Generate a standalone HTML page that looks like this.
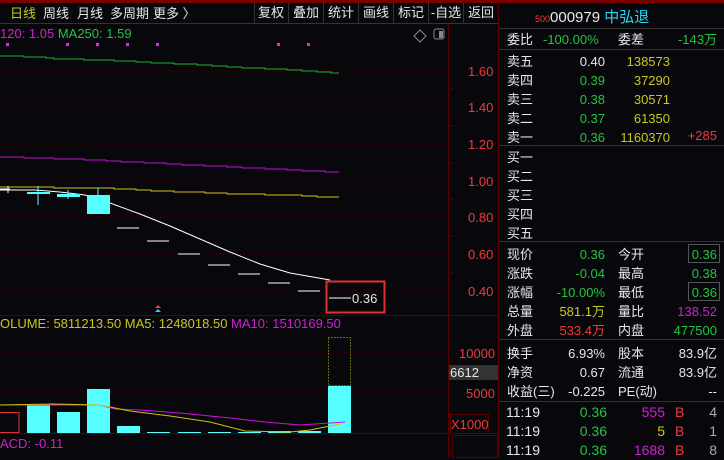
<!DOCTYPE html>
<html><head><meta charset="utf-8"><style>
body{margin:0;width:724px;height:458px;background:#08080c;overflow:hidden;font-family:"Liberation Sans","Noto Sans CJK SC",sans-serif;font-size:13px;color:#ddd;position:relative}
.a{position:absolute;white-space:nowrap;line-height:15px}
.r{text-align:right}
.w{color:#e8e8e8}.g{color:#22c440}.y{color:#c8c81e}.rd{color:#f03a3a}.m{color:#d020d0}.c{color:#20d8f0}.gr{color:#aaa}
.tb{position:absolute;top:3px;height:20px;border-right:1px solid #333;color:#e8e8e8;line-height:20px;font-size:13px;text-align:center}
</style></head><body>
<div style="position:absolute;left:0;top:0;width:724px;height:3px;background:#7a0000"></div>
<div style="position:absolute;left:0;top:23px;width:498px;height:1px;background:#333"></div>
<div class="a" style="left:10px;top:6px;color:#c8c81e">日线</div>
<div class="a w" style="left:43px;top:6px">周线</div>
<div class="a w" style="left:77px;top:6px">月线</div>
<div class="a w" style="left:110px;top:6px">多周期</div>
<div class="a w" style="left:153px;top:6px">更多 〉</div>
<div style="position:absolute;left:254px;top:3px;height:20px;width:1px;background:#333"></div>
<div class="tb" style="left:254px;width:34px">复权</div>
<div class="tb" style="left:289px;width:34px">叠加</div>
<div class="tb" style="left:324px;width:34px">统计</div>
<div class="tb" style="left:359px;width:34px">画线</div>
<div class="tb" style="left:394px;width:34px">标记</div>
<div class="tb" style="left:429px;width:34px">-自选</div>
<div class="tb" style="left:464px;width:34px">返回</div>
<div class="a m" style="left:0;top:26px">120: 1.05 <span class="g">MA250: 1.59</span></div>
<svg style="position:absolute;left:0;top:0" width="499" height="458">
<g stroke="#5a0000" stroke-dasharray="1,3">
<line x1="0" y1="71" x2="448" y2="71"/><line x1="0" y1="107" x2="448" y2="107"/><line x1="0" y1="144" x2="448" y2="144"/><line x1="0" y1="181" x2="448" y2="181"/><line x1="0" y1="217" x2="448" y2="217"/><line x1="0" y1="254" x2="448" y2="254"/><line x1="0" y1="291" x2="448" y2="291"/><line x1="0" y1="353" x2="448" y2="353"/><line x1="0" y1="393" x2="448" y2="393"/></g>
<line x1="448.5" y1="24" x2="448.5" y2="458" stroke="#5a0000"/>
<line x1="0" y1="315.5" x2="498" y2="315.5" stroke="#5a0000"/>
<line x1="0" y1="433.5" x2="498" y2="433.5" stroke="#5a0000"/>
<line x1="498.5" y1="0" x2="498.5" y2="458" stroke="#5a0000"/>
<g stroke="#5a0000"><line x1="448" y1="89" x2="453" y2="89"/><line x1="448" y1="126" x2="453" y2="126"/><line x1="448" y1="163" x2="453" y2="163"/><line x1="448" y1="199" x2="453" y2="199"/><line x1="448" y1="236" x2="453" y2="236"/><line x1="448" y1="273" x2="453" y2="273"/></g>
<g fill="#f020f0"><rect x="6" y="43" width="3" height="3"/><rect x="66" y="43" width="3" height="3"/><rect x="96" y="43" width="3" height="3"/><rect x="126" y="43" width="3" height="3"/><rect x="156" y="43" width="3" height="3"/><rect x="277" y="43" width="3" height="3"/><rect x="307" y="43" width="3" height="3"/></g>
<polyline fill="none" stroke="#20b030" stroke-width="1" points="0,56 24,56 24,57 46,57 46,58 54,58 54,59 84,59 84,60 114,60 114,61 136,61 136,62 151,62 151,63 174,63 174,64 197,64 197,65 212,65 212,66 227,66 227,67 242,67 242,68 265,68 265,69 287,69 287,70 302,70 302,71 317,71 317,72 331,72 331,73 339,73"/>
<polyline fill="none" stroke="#c010d0" stroke-width="1" points="0,157 24,157 24,158 54,158 54,159 84,159 84,160 106,160 106,161 121,161 121,162 144,162 144,163 166,163 166,164 182,164 182,165 204,165 204,166 227,166 227,167 242,167 242,168 265,168 265,169 287,169 287,170 302,170 302,171 325,171 325,172 339,172"/>
<polyline fill="none" stroke="#d0c010" stroke-width="1" points="0,187 54,187 54,188 114,188 114,189 136,189 136,190 151,190 151,191 174,191 174,192 205,192 205,193 227,193 227,194 265,194 265,195 302,195 302,196 317,196 317,197 339,197"/>
<polyline fill="none" stroke="#fff" stroke-width="1" points="0,190 35,190 60,192 85,195 110,203 140,214 170,226 200,239 230,252 260,264 290,273 330,280"/>
<g stroke="#fff"><line x1="0" y1="189" x2="10" y2="189"/><line x1="8" y1="186" x2="8" y2="193"/><line x1="117" y1="228" x2="139" y2="228"/><line x1="147" y1="241" x2="169" y2="241"/><line x1="178" y1="254" x2="200" y2="254"/><line x1="208" y1="265" x2="230" y2="265"/><line x1="238" y1="274" x2="260" y2="274"/><line x1="268" y1="283" x2="290" y2="283"/><line x1="298" y1="291" x2="320" y2="291"/><line x1="329" y1="298" x2="351" y2="298"/></g>
<g fill="#5ff"><rect x="27" y="192" width="23" height="2"/><line x1="38" y1="186" x2="38" y2="205" stroke="#5ff"/><rect x="57" y="194" width="23" height="3"/><line x1="68" y1="190" x2="68" y2="199" stroke="#5ff"/><rect x="87" y="195" width="23" height="19"/><line x1="98" y1="188" x2="98" y2="195" stroke="#5ff"/></g>
<rect x="326.5" y="281.5" width="58" height="31" fill="none" stroke="#e03030" stroke-width="2"/>
<path d="M155 308 l3 -3 l3 3z" fill="#f33"/><path d="M155 312 l3 -3 l3 3z" fill="#3cf"/>
<g fill="#5ff"><rect x="27" y="404" width="23" height="29"/><rect x="57" y="412" width="23" height="21"/><rect x="87" y="389" width="23" height="44"/><rect x="117" y="426" width="23" height="7"/><rect x="147" y="432" width="23" height="1"/><rect x="178" y="432" width="23" height="1"/><rect x="208" y="432" width="23" height="1"/><rect x="238" y="432" width="23" height="1"/><rect x="268" y="431" width="23" height="2"/><rect x="298" y="431" width="23" height="2"/><rect x="328" y="386" width="23" height="47"/></g>
<rect x="328.5" y="337.5" width="22" height="48" fill="none" stroke="#c8c81e" stroke-dasharray="1,2"/>
<rect x="-1" y="412.5" width="20" height="20" fill="none" stroke="#e03030"/>
<polyline fill="none" stroke="#d010e0" points="0,405 100,405 115,409 140,410 180,413 230,418 265,422 300,425 330,423 345,422"/>
<polyline fill="none" stroke="#d0c010" points="0,405 53,404 100,405 115,408 130,411 170,416 210,422 245,431 290,432 310,430 330,426 340,424"/>
<rect x="450.5" y="414.5" width="38" height="19" fill="none" stroke="#5a0000"/>
<rect x="449" y="365" width="49" height="15" fill="#333"/>
<rect x="452.5" y="435.5" width="45" height="22" fill="none" stroke="#5a0000"/>
<path d="M420 30 l6 6 l-6 6 l-6 -6z" fill="none" stroke="#888"/>
<rect x="434" y="29" width="10" height="10" rx="2" fill="none" stroke="#888"/><rect x="439" y="31" width="4" height="7" fill="#888"/>
</svg>
<div class="a rd" style="left:468px;top:64px">1.60</div>
<div class="a rd" style="left:468px;top:100px">1.40</div>
<div class="a rd" style="left:468px;top:137px">1.20</div>
<div class="a rd" style="left:468px;top:174px">1.00</div>
<div class="a rd" style="left:468px;top:210px">0.80</div>
<div class="a rd" style="left:468px;top:247px">0.60</div>
<div class="a rd" style="left:468px;top:284px">0.40</div>
<div class="a w" style="left:352px;top:291px">0.36</div>
<div class="a y" style="left:0;top:316px">OLUME: 5811213.50 MA5: 1248018.50 <span class="m">MA10: 1510169.50</span></div>
<div class="a rd" style="left:459px;top:346px">10000</div>
<div class="a w" style="left:450px;top:365px">6612</div>
<div class="a rd" style="left:466px;top:386px">5000</div>
<div class="a rd" style="left:451px;top:417px">X1000</div>
<div class="a m" style="left:0;top:436px">ACD: -0.11</div>
<div style="position:absolute;left:499px;top:28px;width:225px;height:1px;background:#333"></div>
<div style="position:absolute;left:499px;top:49px;width:225px;height:1px;background:#333"></div>
<div style="position:absolute;left:499px;top:145px;width:225px;height:1px;background:#333"></div>
<div style="position:absolute;left:499px;top:241px;width:225px;height:1px;background:#333"></div>
<div style="position:absolute;left:499px;top:339px;width:225px;height:1px;background:#333"></div>
<div style="position:absolute;left:499px;top:401px;width:225px;height:1px;background:#333"></div>
<div class="a" style="left:535px;top:10px;font-size:15px"><span class="rd" style="font-size:9px">500</span><span class="w">000979</span> <span class="c">中弘退</span></div>
<div class="a w" style="left:507px;top:32px">委比</div><div class="a g" style="left:543px;top:32px">-100.00%</div>
<div class="a w" style="left:618px;top:32px">委差</div><div class="a g r" style="left:640px;top:32px;width:77px">-143万</div>
<div class="a w" style="left:507px;top:52px;line-height:19px">卖五<br>卖四<br>卖三<br>卖二<br>卖一</div>
<div class="a r" style="left:560px;top:52px;width:45px;line-height:19px"><span class="w">0.40</span><br><span class="g">0.39<br>0.38<br>0.37<br>0.36</span></div>
<div class="a y r" style="left:606px;top:52px;width:64px;line-height:19px">138573<br>37290<br>30571<br>61350<br>1160370</div>
<div class="a rd r" style="left:670px;top:128px;width:47px">+285</div>
<div class="a w" style="left:507px;top:148px;line-height:19px">买一<br>买二<br>买三<br>买四<br>买五</div>
<div class="a w" style="left:507px;top:245px;line-height:19px">现价<br>涨跌<br>涨幅<br>总量<br>外盘</div>
<div class="a r" style="left:540px;top:245px;width:65px;line-height:19px"><span class="g">0.36<br>-0.04<br>-10.00%</span><br><span class="y">581.1万</span><br><span class="rd">533.4万</span></div>
<div class="a w" style="left:618px;top:245px;line-height:19px">今开<br>最高<br>最低<br>量比<br>内盘</div>
<div class="a r" style="left:650px;top:245px;width:67px;line-height:19px"><span class="g">0.36<br>0.38<br>0.36</span><br><span class="m">138.52</span><br><span class="g">477500</span></div>
<div style="position:absolute;left:688px;top:244px;width:30px;height:17px;border:1px solid #555"></div>
<div style="position:absolute;left:688px;top:282px;width:30px;height:17px;border:1px solid #555"></div>
<div class="a w" style="left:507px;top:344px;line-height:19px">换手<br>净资<br>收益(三)</div>
<div class="a w r" style="left:540px;top:344px;width:65px;line-height:19px">6.93%<br>0.67<br>-0.225</div>
<div class="a w" style="left:618px;top:344px;line-height:19px">股本<br>流通<br>PE(动)</div>
<div class="a w r" style="left:650px;top:344px;width:67px;line-height:19px">83.9亿<br>83.9亿<br>--</div>
<div class="a w" style="left:506px;top:403px;line-height:19px;font-size:14px">11:19<br>11:19<br>11:19</div>
<div class="a g r" style="left:560px;top:403px;width:47px;line-height:19px;font-size:14px">0.36<br>0.36<br>0.36</div>
<div class="a r" style="left:620px;top:403px;width:45px;line-height:19px;font-size:14px"><span class="m">555</span><br><span class="y">5</span><br><span class="m">1688</span></div>
<div class="a rd" style="left:675px;top:403px;line-height:19px;font-size:14px">B<br>B<br>B</div>
<div class="a gr r" style="left:700px;top:403px;width:17px;line-height:19px;font-size:14px">4<br>1<br>8</div>
</body></html>
